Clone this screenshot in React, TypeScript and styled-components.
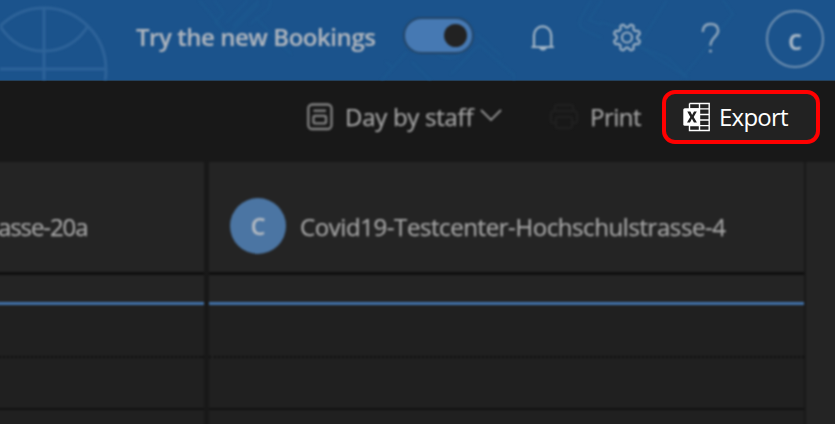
import React from "react";
import styled, { createGlobalStyle } from "styled-components";

const GlobalStyle = createGlobalStyle`
  * { box-sizing: border-box; }
  body { margin: 0; background: #181818; overflow: hidden; }
`;

const Page = styled.div`
  position: relative;
  display: flex;
  flex-direction: column;
  width: 835px;
  height: 424px;
  overflow: hidden;
  background: #181818;
  color: #a5a5a5;
  font-family: "Open Sans", "Noto Sans", sans-serif;
`;

const Header = styled.header`
  position: relative;
  display: flex;
  align-items: center;
  flex: 0 0 81px;
  height: 81px;
  padding: 0 11px 6px 136px;
  background: #1b538c;
  border-bottom: 1px solid #23415d;
`;

const Pattern = styled.svg`
  position: absolute;
  inset: 0;
  filter: blur(0.8px);
`;

const Label = styled.span<{ $size: number; $weight?: number; $spacing?: number; $soft?: boolean; $stroke?: number }>`
  display: block;
  font-size: ${(p) => p.$size}px;
  font-weight: ${(p) => p.$weight ?? 400};
  letter-spacing: ${(p) => p.$spacing ?? 0}px;
  line-height: 34px;
  white-space: nowrap;
  -webkit-text-stroke: ${(p) => p.$stroke ?? 0}px currentColor;
  filter: ${(p) => (p.$soft ? "blur(0.8px)" : "none")};
`;

const HeaderLabel = styled.div`
  position: relative;
  width: 267px;
  color: #b0b6be;
`;

const Toggle = styled.div`
  position: relative;
  display: flex;
  justify-content: flex-end;
  align-items: center;
  width: 71px;
  height: 37px;
  margin-top: -3px;
  padding-right: 5px;
  border: 2px solid #244668;
  border-radius: 19px;
  background: #4679b3;
  filter: blur(0.8px);
`;

const Knob = styled.div`
  width: 23px;
  height: 23px;
  border-radius: 50%;
  background: #222;
`;

const Glyph = styled.svg<{ $gap: number }>`
  position: relative;
  flex: none;
  margin-left: ${(p) => p.$gap}px;
  filter: blur(0.8px);
`;

const Account = styled.div`
  position: relative;
  display: grid;
  place-items: center;
  width: 58px;
  height: 58px;
  margin: 3px 0 0 auto;
  border: 2px solid #7090b0;
  border-radius: 50%;
  color: #a9b8c7;
  filter: blur(0.8px);
`;

const Toolbar = styled.nav`
  display: flex;
  align-items: center;
  flex: 0 0 81px;
  padding: 0 15px 9px 307px;
`;

const ToolLabel = styled.div<{ $left: number; $width: number }>`
  width: ${(p) => p.$width}px;
  margin-left: ${(p) => p.$left}px;
  color: #a4a4a4;
`;

const ExportButton = styled.button`
  display: flex;
  align-items: center;
  width: 158px;
  height: 54px;
  margin: 0 0 0 auto;
  padding: 0 0 0 17px;
  border: 4px solid #ff0000;
  border-radius: 13px;
  background: #222;
  color: #fff;
  font-family: inherit;
`;

const ExportLabel = styled.div`
  margin-left: 8px;
`;

/* The grid runs past the page edges so that its softened rim stays out of view. */
const Calendar = styled.main`
  display: flex;
  flex: 1;
  gap: 5px;
  margin: 0 -8px -8px;
  filter: blur(0.8px);
`;

const StaffColumn = styled.section<{ $width: number }>`
  display: flex;
  flex-direction: column;
  width: ${(p) => p.$width}px;
  flex: none;
  background: #202020;
`;

const StaffHeader = styled.div<{ $left: number }>`
  display: flex;
  align-items: center;
  height: 113px;
  padding: 18px 0 0 ${(p) => p.$left}px;
  border-bottom: 3px solid #0f0f0f;
  background: #242424;
  color: #a5a5a5;
`;

const StaffName = styled.div`
  padding-top: 2px;
`;

const Avatar = styled.div`
  display: grid;
  place-items: center;
  width: 56px;
  height: 56px;
  margin-right: 14px;
  border-radius: 50%;
  background: #4b75a3;
  color: #b3bac2;
`;

const AllDay = styled.div`
  height: 30px;
  border-bottom: 3px solid #4171a8;
  background: #242424;
`;

const HalfHour = styled.div<{ $dashed?: boolean; $height: number }>`
  height: ${(p) => p.$height}px;
  border-bottom: 2px ${(p) => (p.$dashed ? "dotted #0c0c0c" : "solid #111")};
`;

const Rail = styled.aside`
  flex: 1;
  margin-left: -3px;
  background: #242424;
`;

function HeaderPattern() {
  return (
    <Pattern width="835" height="80" fill="none" strokeWidth="2">
      <g stroke="#2e6399" strokeWidth="3">
        <circle cx="44" cy="70" r="62" />
        <path d="M44 8v72M0 69h106M0 26Q16 51 44 51T88 26" />
      </g>
      <g stroke="#1c588f">
        <path d="M199 0l20 24m-5-24l10 13-9 9 13 12M226 23L248 0m-15 26L259 0m-27 31l27-27m12-4l-3 10-18 14m5-7l36 37" />
        <path d="M380 82l27-30m-21 10l6 5m20-5l20 20m19-8l28-29 35 30v9M477 34l24 22M430 46q20 24 38 0" />
        <path d="M591 0l-11 20q-2 6 4 10l17 8M602 0l-13 20 13 5M667 0l-28 45M600 22l27 8M626 38l62 40-20-20-30-12M682 78l51-64-10-14" />
      </g>
    </Pattern>
  );
}

function ExcelIcon() {
  return (
    <svg width="28" height="30" viewBox="0 0 28 30" fill="none">
      <path d="M6.5 1.5h19.7v27H6.5V1.5M16.5 1v28M7 6.9h19.2M16.5 12.5h9.7M16.5 18h9.7M7 23.6h19.2" stroke="#fff" strokeWidth="1.4" />
      <rect x="0.3" y="6.2" width="16.7" height="17.6" rx="1.5" fill="#fff" />
      <path d="M4.3 9.5h3.1l1.7 3.6 1.9-3.6h2.8l-3.1 5.5 3.2 5.5h-3l-2-3.7-1.9 3.7H4l3.3-5.5z" fill="#202020" />
    </svg>
  );
}

export default function App() {
  const gear = Array.from({ length: 96 }, (_, i) => {
    const a = (i / 96) * Math.PI * 2 + Math.PI / 8;
    const r = 11.8 - 1.7 * Math.tanh(2.2 * Math.cos(8 * a));
    return `${15 + r * Math.cos(a)},${15 + r * Math.sin(a)}`;
  }).join(" ");

  return (
    <Page>
      <GlobalStyle />
      <Header>
        <HeaderPattern />
        <HeaderLabel><Label $size={24} $weight={600} $spacing={-0.45} $stroke={0.15} $soft>Try the new Bookings</Label></HeaderLabel>
        <Toggle><Knob /></Toggle>
        <Glyph $gap={57} width="24" height="30" viewBox="0 0 24 30" fill="none" stroke="#a2b5c6" strokeWidth="2.2">
          <path d="M3 25V13a8.6 8.6 0 0 1 17.2 0v12M.5 25h22.4" />
          <path d="M8 25h8q-.8 3.6-4 3.6T8 25z" fill="#a2b5c6" stroke="none" />
        </Glyph>
        <Glyph $gap={57} width="30" height="32" viewBox="0 -1.5 30 32" fill="none" stroke="#9aafc3" strokeWidth="2.2">
          <polygon points={gear} strokeLinejoin="round" />
          <circle cx="15" cy="15" r="5" />
        </Glyph>
        <Glyph $gap={59} width="20" height="34" viewBox="0 -1 20 34" fill="none" stroke="#91a7bc" strokeWidth="2.4">
          <path d="M1.8 11Q2 3 9.5 3t7.7 6.8c0 5.7-7.7 7-7.7 14.9" />
          <circle cx="9.5" cy="30" r="1.6" fill="#91a7bc" stroke="none" />
        </Glyph>
        <Account><Label $size={28} $weight={600}>c</Label></Account>
      </Header>
      <Toolbar>
        <Glyph $gap={0} width="26" height="28" viewBox="0 0 26 28" fill="none" stroke="#828282" strokeWidth="2.3">
          <rect x="1.3" y="1.5" width="23.2" height="24.5" rx="4" />
          <path d="M6.5 7.7h12.5" />
          <rect x="6.5" y="12.8" width="12.5" height="7.5" rx="1.5" />
        </Glyph>
        <ToolLabel $left={12} $width={134}><Label $size={24} $spacing={-0.27} $stroke={0.25} $soft>Day by staff</Label></ToolLabel>
        <Glyph $gap={1} width="22" height="16" viewBox="0 0 22 16" fill="none" stroke="#929292" strokeWidth="1.9">
          <path d="M1 1l10 10L21 1" />
        </Glyph>
        <Glyph $gap={47} width="30" height="28" viewBox="0 0 30 28" fill="none" stroke="#212121" strokeWidth="2">
          <path d="M6 8V4q0-2 2-2h14q2 0 2 2v4M6 20H4q-2 0-2-2v-7q0-3 3-3h20q3 0 3 3v7q0 2-2 2h-2" />
          <rect x="7" y="14" width="16" height="11" rx="2" />
        </Glyph>
        <ToolLabel $left={11} $width={54}><Label $size={24} $spacing={-0.5} $stroke={0.25} $soft>Print</Label></ToolLabel>
        <ExportButton>
          <ExcelIcon />
          <ExportLabel><Label $size={24} $spacing={-0.75}>Export</Label></ExportLabel>
        </ExportButton>
      </Toolbar>
      <Calendar>
        <StaffColumn $width={212}>
          <StaffHeader $left={6}>
            <StaffName><Label $size={24} $spacing={-1.1} $stroke={0.25}>asse-20a</Label></StaffName>
          </StaffHeader>
          <AllDay />
          <HalfHour $dashed $height={53} />
          <HalfHour $height={52} />
        </StaffColumn>
        <StaffColumn $width={595}>
          <StaffHeader $left={21}>
            <Avatar><Label $size={23} $weight={600} $stroke={0.3}>C</Label></Avatar>
            <StaffName><Label $size={24} $spacing={-0.42} $stroke={0.25}>Covid19-Testcenter-Hochschulstrasse-4</Label></StaffName>
          </StaffHeader>
          <AllDay />
          <HalfHour $dashed $height={53} />
          <HalfHour $height={52} />
        </StaffColumn>
        <Rail />
      </Calendar>
    </Page>
  );
}
